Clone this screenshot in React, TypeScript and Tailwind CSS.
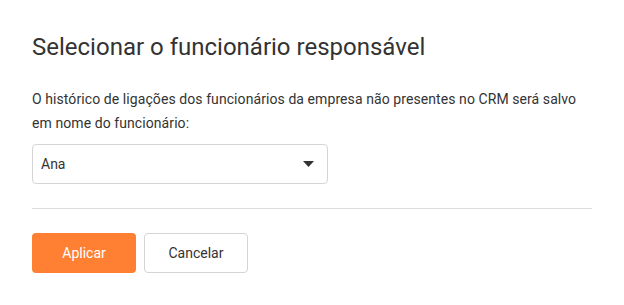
export default function App() {
  return (
    <div
      className="w-[624px] h-[305px] bg-white pl-[32px] pr-[32px] pt-[32px] text-[#333333]"
      style={{ fontFamily: "Roboto, 'Liberation Sans', sans-serif" }}
    >
      <h1 className="text-[24px] leading-[30px] font-normal text-[#333333]">
        Selecionar o funcionário responsável
      </h1>
      <p className="mt-[25px] max-w-[550px] text-[14px] leading-[24px] tracking-[0.08px] text-[#333333]">
        O histórico de ligações dos funcionários da empresa não presentes no CRM será salvo em nome do funcionário:
      </p>
      <div className="mt-[9px] w-[296px] h-[40px] border border-[#d5d5d5] rounded-[4px] flex items-center justify-between pl-[8px] pr-[13px]">
        <span className="text-[14px] text-[#333333]">Ana</span>
        <svg width="11" height="6" viewBox="0 0 11 6">
          <path d="M0 0 H11 L5.5 6 Z" fill="#333333" />
        </svg>
      </div>
      <div className="mt-[24px] h-px bg-[#dcdcdc]" />
      <div className="mt-[24px] flex gap-[8px]">
        <button className="w-[104px] h-[40px] rounded-[4px] bg-[#ff7f33] text-white text-[14px] font-normal">
          Aplicar
        </button>
        <button className="w-[104px] h-[40px] rounded-[4px] border border-[#d5d5d5] bg-white text-[#333333] text-[14px] font-normal">
          Cancelar
        </button>
      </div>
    </div>
  );
}
